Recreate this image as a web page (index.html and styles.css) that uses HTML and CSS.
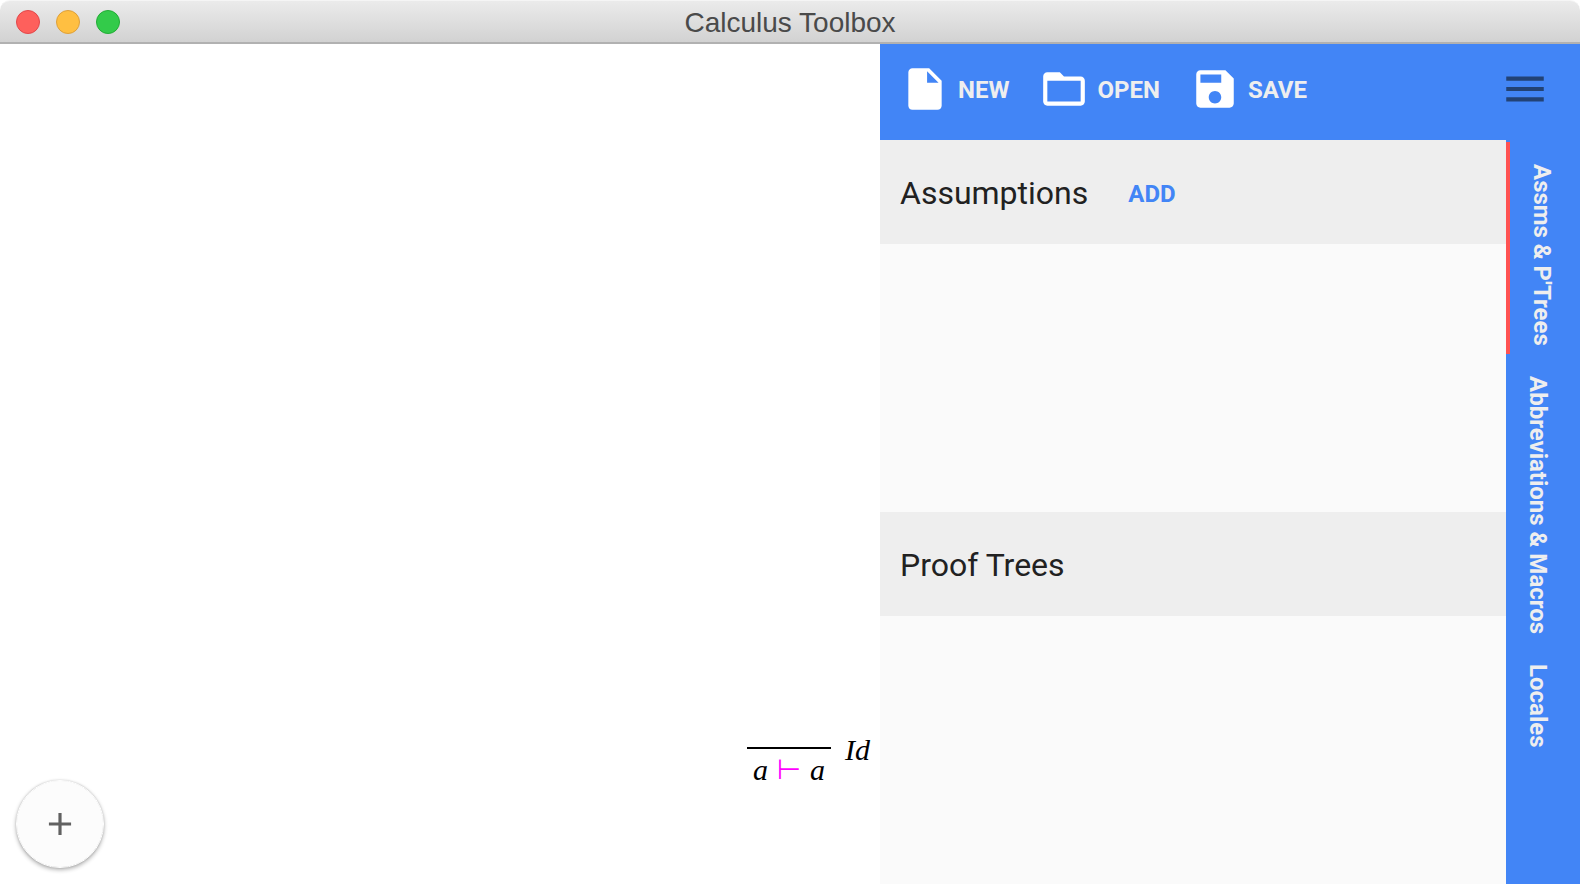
FILE: index.html
```html
<!DOCTYPE html>
<html lang="en">
<head>
<meta charset="utf-8">
<title>Calculus Toolbox</title>
<link rel="stylesheet" href="styles.css">
</head>
<body>
<div class="window">
  <header class="titlebar">
    <div class="lights">
      <button class="light light-close" type="button" aria-label="Close"></button>
      <button class="light light-minimise" type="button" aria-label="Minimise"></button>
      <button class="light light-zoom" type="button" aria-label="Zoom"></button>
    </div>
    <h1 class="title">Calculus Toolbox</h1>
  </header>
  <div class="content">
    <main class="canvas">
      <button class="fab" type="button" aria-label="Add">
        <svg class="fab-icon" viewBox="0 0 24 24"><path d="M19 13h-6v6h-2v-6H5v-2h6V5h2v6h6z"/></svg>
      </button>
      <div class="proof">
        <div class="inference"><span>a</span><span class="turnstile">⊢</span><span>a</span></div>
        <div class="rule-name">Id</div>
      </div>
    </main>
    <aside class="panel">
      <div class="toolbar">
        <button class="tool" type="button">
          <svg class="icon" viewBox="0 0 24 24"><path d="M6 2c-1.100 0-1.990.9-1.990 2L4 20c0 1.100.89 2 1.990 2H18c1.100 0 2-.9 2-2V8l-6-6H6zm7 7V3.500L18.500 9H13z"/></svg>
          <span class="tool-label">NEW</span>
        </button>
        <button class="tool" type="button">
          <svg class="icon" viewBox="0 0 24 24"><path d="M20 6h-8l-2-2H4c-1.100 0-1.990.9-1.990 2L2 18c0 1.100.9 2 2 2h16c1.100 0 2-.9 2-2V8c0-1.100-.9-2-2-2zm0 12H4V8h16v10z"/></svg>
          <span class="tool-label">OPEN</span>
        </button>
        <button class="tool" type="button">
          <svg class="icon" viewBox="0 0 24 24"><path d="M17 3H5c-1.110 0-2 .9-2 2v14c0 1.100.89 2 2 2h14c1.100 0 2-.9 2-2V7l-4-4zm-5 16c-1.660 0-3-1.340-3-3s1.340-3 3-3 3 1.340 3 3-1.340 3-3 3zm3-10H5V5h10v4z"/></svg>
          <span class="tool-label">SAVE</span>
        </button>
        <button class="tool menu" type="button" aria-label="Menu">
          <svg class="icon" viewBox="0 0 24 24"><path d="M3 18h18v-2H3v2zm0-5h18v-2H3v2zm0-7v2h18V6H3z"/></svg>
        </button>
      </div>
      <div class="panel-body">
        <div class="sections">
          <section class="section">
            <div class="section-head">
              <h2 class="section-title">Assumptions</h2>
              <button class="add" type="button">ADD</button>
            </div>
          </section>
          <section class="section">
            <div class="section-head">
              <h2 class="section-title">Proof Trees</h2>
            </div>
          </section>
        </div>
        <nav class="tabs" aria-label="Panels">
          <button class="tab tab-active" type="button">Assms &amp; P'Trees</button>
          <button class="tab" type="button">Abbreviations &amp; Macros</button>
          <button class="tab" type="button">Locales</button>
        </nav>
      </div>
    </aside>
  </div>
</div>
</body>
</html>
```
FILE: styles.css
```css
* {
  box-sizing: border-box;
}

body {
  margin: 0;
  background: #fff;
  font-family: Roboto, sans-serif;
}

button {
  margin: 0;
  padding: 0;
  border: 0;
  background: none;
  color: inherit;
  font: inherit;
}

h1,
h2 {
  margin: 0;
  font-weight: 400;
}

.window {
  display: flex;
  flex-direction: column;
  min-height: 100vh;
}

.titlebar {
  display: grid;
  grid-template-columns: 1fr auto 1fr;
  align-items: center;
  height: 44px;
  padding: 0 16px;
  border-top: 1px solid #f5f5f5;
  border-bottom: 2px solid #b1b1b1;
  border-radius: 10px 10px 0 0;
  background: linear-gradient(#ebebeb, #d2d2d2);
}

.lights {
  display: flex;
  gap: 16px;
}

.light {
  width: 24px;
  height: 24px;
  border: 1px solid;
  border-radius: 50%;
}

.light-close {
  border-color: #e2474a;
  background: #fe605c;
}

.light-minimise {
  border-color: #dea03a;
  background: #ffbf41;
}

.light-zoom {
  border-color: #22ac35;
  background: #33cb4a;
}

.title {
  padding-top: 2px;
  color: #4a4a4a;
  font: 28px/32px "Liberation Sans", Arial, sans-serif;
}

.content {
  display: grid;
  flex: 1;
  grid-template-columns: minmax(0, 44fr) minmax(0, 35fr);
}

.canvas {
  display: flex;
  align-items: flex-end;
  justify-content: space-between;
  padding: 16px 10px 16px 16px;
}

.fab {
  display: grid;
  place-items: center;
  width: 88px;
  height: 88px;
  border: 1px solid #fff;
  border-radius: 50%;
  background: #fcfcfc;
  background-clip: padding-box;
  box-shadow: 0 2px 4px rgba(0, 0, 0, 0.3), 0 0 2px rgba(0, 0, 0, 0.15);
}

.fab-icon {
  width: 38px;
  height: 38px;
  fill: #616161;
}

.proof {
  display: flex;
  gap: 14px;
  padding-bottom: 80px;
  color: #000;
  font: italic 30px/36px "Liberation Serif", serif;
}

.inference {
  display: flex;
  align-items: center;
  justify-content: space-between;
  width: 84px;
  margin-top: 15px;
  padding: 3px 6px 0;
  border-top: 2px solid #000;
}

.rule-name {
  line-height: 36px;
}

.turnstile {
  color: #f0f;
  font: 400 28px/32px "DejaVu Sans", sans-serif;
}

.panel {
  display: flex;
  flex-direction: column;
}

.toolbar {
  display: flex;
  align-items: center;
  gap: 30px;
  height: 96px;
  padding: 0 30px 6px 20px;
  background: #4285f6;
}

.tool {
  display: flex;
  align-items: center;
  gap: 8px;
  color: #eee;
  font-size: 24px;
  font-weight: 700;
  line-height: 32px;
}

.tool-label {
  padding-top: 2px;
}

.icon {
  width: 50px;
  height: 50px;
  fill: #fff;
}

.menu {
  margin-left: auto;
}

.menu .icon {
  fill: #224275;
}

.panel-body {
  display: flex;
  flex: 1;
}

.sections {
  display: flex;
  flex: 1;
  flex-direction: column;
  background: #fafafa;
}

.section {
  flex: 1;
}

.section-head {
  display: flex;
  align-items: center;
  gap: 40px;
  height: 104px;
  padding: 2px 20px 0;
  background: #eee;
}

.section-title {
  color: #212121;
  font-size: 32px;
  line-height: 40px;
}

.add {
  padding-top: 2px;
  color: #4285f6;
  font-size: 24px;
  font-weight: 700;
  line-height: 32px;
}

.tabs {
  display: flex;
  flex-direction: column;
  width: 74px;
  padding-top: 2px;
  background: #4285f6;
}

.tab {
  padding: 22px 27px 8px 17px;
  color: #eee;
  font-size: 24px;
  font-weight: 700;
  line-height: 30px;
  text-align: left;
  white-space: nowrap;
  writing-mode: vertical-rl;
}

.tab-active {
  padding-right: 23px;
  border-left: 4px solid #ff5252;
}
```
